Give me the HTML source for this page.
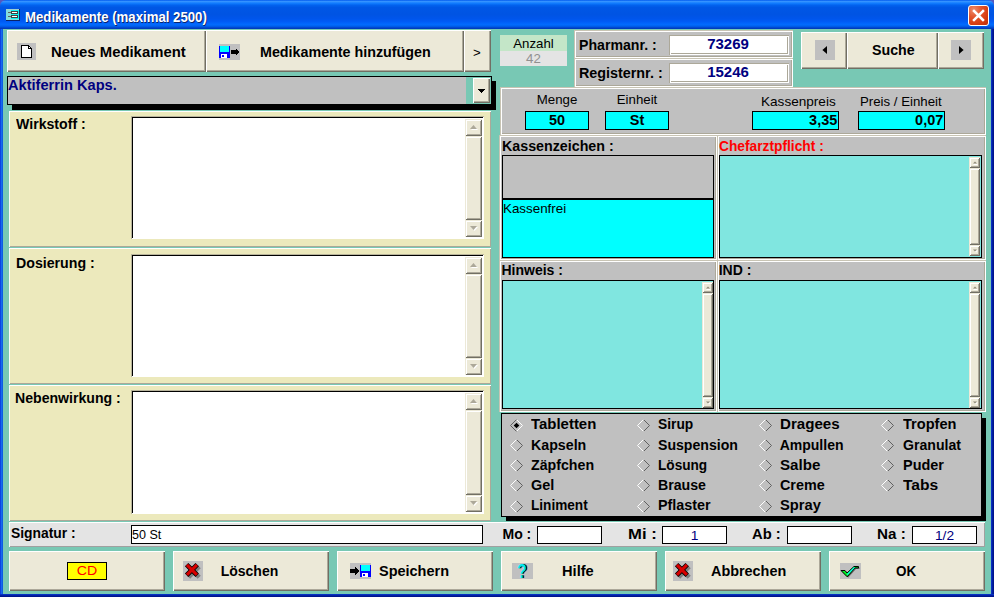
<!DOCTYPE html>
<html lang="de"><head><meta charset="utf-8"><title>Medikamente (maximal 2500)</title>
<style>
html,body{margin:0;padding:0;}
body{width:994px;height:597px;overflow:hidden;position:relative;background:#78C8B4;font-family:"Liberation Sans",sans-serif;}
body>div,body>svg,body>span{position:absolute;display:block;}
.t{white-space:nowrap;line-height:1;}
.titlebar{left:0;top:0;width:994px;height:29px;border-radius:6px 6px 0 0;
 background:linear-gradient(to bottom,#0058EE 0%,#3593FF 5%,#127DFF 11%,#0262EE 18%,#0057E5 26%,#0054E3 50%,#0055EB 64%,#005BF5 74%,#026AFE 84%,#0062EF 90%,#0048D0 95%,#0034B4 100%);}
.bl{left:0;top:29px;width:3px;height:568px;background:linear-gradient(to right,#0831D9,#166AEE,#0855DD);}
.br{left:991px;top:29px;width:3px;height:568px;background:linear-gradient(to right,#0838D0 0%,#0428B4 35%,#00168F 65%,#00138C 100%);}
.bb{left:0;top:594px;width:994px;height:3px;background:linear-gradient(to bottom,#0838D0 0%,#0428B4 35%,#00168F 65%,#00138C 100%);}
.close{left:968px;top:5px;width:21px;height:21px;border-radius:3px;box-sizing:border-box;border:1px solid #fff;
 background:radial-gradient(circle at 25% 20%,#EE8C6C 0%,#E2562E 35%,#D63C10 70%,#B82E08 100%);}
.close svg{position:absolute;left:-1px;top:-1px;}
.btn{background:#ECE9D8;box-sizing:border-box;box-shadow:inset 1px 1px 0 #fff, inset -1px -1px 0 #716F64, inset -2px -2px 0 #ACA899;}
.sbtn{background:#ECE9D8;box-sizing:border-box;box-shadow:inset 1px 1px 0 #ECE9D8, inset -1px -1px 0 #716F64, inset 2px 2px 0 #fff, inset -2px -2px 0 #ACA899;}
.raisedL{box-sizing:border-box;box-shadow:inset 1px 1px 0 #fff, inset -1px -1px 0 #ACA899;}
.raised{box-sizing:border-box;box-shadow:inset 1px 1px 0 #fff, inset -1px -1px 0 #808080;}
.etched{box-sizing:border-box;box-shadow:inset 1px 1px 0 #C8C4B4, inset -1px -1px 0 #fff, inset 2px 2px 0 #fff, inset -2px -2px 0 #ACA899;}
.raised2{box-sizing:border-box;box-shadow:inset 1px 1px 0 #fff, inset -1px -1px 0 #ACA899, inset 2px 2px 0 #ACA899, inset -2px -2px 0 #fff;}
.sunk{box-sizing:border-box;box-shadow:inset 1px 1px 0 #B8B49C, inset -1px -1px 0 #fff, inset 2px 2px 0 #000;}
.sunk2{box-sizing:border-box;box-shadow:inset 1px 1px 0 #ACA899, inset -1px -1px 0 #fff, inset 2px 2px 0 #fff, inset -2px -2px 0 #ACA899;}
</style></head>
<body>
<div style="left:0;top:0;width:994px;height:8px;background:#5458C0"></div>
<div class="titlebar"></div>
<div class="bl"></div><div class="br"></div><div class="bb"></div>
<svg style="left:6px;top:9px" width="14" height="12" viewBox="0 0 14 12" shape-rendering="crispEdges">
<rect x="0" y="0" width="14" height="12" fill="#0A246A"/><rect x="0" y="0" width="13" height="11" fill="#10F4F4"/>
<rect x="0" y="0" width="5" height="11" fill="#84DCDC"/><rect x="0" y="0" width="13" height="1" fill="#A0D0D0"/><rect x="0" y="10" width="13" height="1" fill="#84DCDC"/>
<rect x="5" y="2" width="7" height="3" fill="#404040"/><rect x="6" y="3" width="5" height="1" fill="#fff"/>
<rect x="5" y="6" width="7" height="3" fill="#404040"/><rect x="6" y="7" width="5" height="1" fill="#fff"/>
<rect x="2" y="3" width="3" height="1" fill="#606060"/><rect x="2" y="7" width="3" height="1" fill="#606060"/>
</svg>
<div class="t" style="left:24.5px;top:9.65px;font-size:14px;color:#fff;font-weight:bold;transform:scaleX(0.942);transform-origin:0 0;text-shadow:1px 1px 0 #0a246a;">Medikamente (maximal 2500)</div>
<div class="close"><svg width="21" height="21" viewBox="0 0 21 21"><path d="M6 6 L15 15 M15 6 L6 15" stroke="#fff" stroke-width="2.5" stroke-linecap="square"/></svg></div>
<div class="btn" style="left:7px;top:30px;width:199px;height:42px"></div>
<div class="btn" style="left:206px;top:30px;width:258px;height:42px"></div>
<div class="btn" style="left:464px;top:30px;width:27px;height:42px"></div>
<svg style="left:17px;top:43px" width="19" height="17" viewBox="0 0 19 17" shape-rendering="crispEdges">
<rect width="19" height="17" fill="#C0C0C0"/>
<path d="M4.5 2.5 H11.5 L14.5 5.5 V14.5 H4.5 Z" fill="#fff" stroke="#000" stroke-width="1"/>
<path d="M11.5 2.5 V5.5 H14.5" fill="none" stroke="#000" stroke-width="1"/></svg>
<div class="t" style="left:50.7px;top:44.85px;font-size:14px;color:#000;font-weight:bold;transform:scaleX(1.062);transform-origin:0 0;">Neues Medikament</div>
<svg style="left:219px;top:44px" width="21" height="16" viewBox="0 0 21 16" shape-rendering="crispEdges">
<rect width="21" height="16" fill="#C0C0C0"/>
<rect x="0" y="2" width="11" height="12" fill="#0000FF"/>
<rect x="1" y="2" width="9" height="6" fill="#00FFFF"/>
<rect x="2" y="10" width="6" height="4" fill="#fff"/>
<rect x="3" y="11" width="2" height="2" fill="#0000FF"/>
<rect x="12" y="6" width="5" height="4" fill="#000"/><path d="M16.5 3.6 L21 8 L16.5 12.4 Z" fill="#000"/></svg>
<div class="t" style="left:260px;top:45.15px;font-size:14px;color:#000;font-weight:bold;transform:scaleX(1.021);transform-origin:0 0;">Medikamente hinzufügen</div>
<div class="t" style="left:473px;top:46px;font-size:13px;color:#000;transform:scaleX(1.020);transform-origin:0 0;">&gt;</div>
<div style="left:12px;top:81px;width:484px;height:29px;background:#000"></div>
<div style="left:7px;top:76px;width:485px;height:29px;background:#C0C0C0;border:1px solid #000;box-sizing:border-box"></div>
<div style="left:466px;top:77px;width:25px;height:27px;background:#78C8B4"></div>
<div class="btn" style="left:473px;top:78px;width:17px;height:25px"></div>
<svg style="left:478px;top:89px" width="7" height="4" viewBox="0 0 7 4" shape-rendering="crispEdges"><path d="M0 0 H7 L3.5 4 Z" fill="#000"/></svg>
<div class="t" style="left:7.5px;top:77.85px;font-size:14px;color:#000080;font-weight:bold;transform:scaleX(1.043);transform-origin:0 0;">Aktiferrin Kaps.</div>
<div class="raisedL" style="left:9px;top:111px;width:482px;height:136px;background:#ECE9BC"></div>
<div class="sunk" style="left:131px;top:116px;width:353px;height:123px;background:#fff"></div>
<div style="left:465px;top:119px;width:17px;height:118px;background:#ECE9D8"></div>
<div class="sbtn" style="left:465px;top:119px;width:17px;height:17px"></div>
<div class="sbtn" style="left:465px;top:136px;width:17px;height:84px"></div>
<div class="sbtn" style="left:465px;top:220px;width:17px;height:17px"></div>
<svg style="left:470px;top:125px" width="8" height="5" viewBox="0 0 8 5"><path d="M1 5 H8 L4.5 1 Z" fill="#fff"/><path d="M0 4 H7 L3.5 0 Z" fill="#ACA899"/></svg>
<svg style="left:470px;top:226px" width="8" height="5" viewBox="0 0 8 5"><path d="M1 1 H8 L4.5 5 Z" fill="#fff"/><path d="M0 0 H7 L3.5 4 Z" fill="#ACA899"/></svg>
<div class="t" style="left:15.5px;top:117.15px;font-size:14px;color:#000;font-weight:bold;transform:scaleX(1.009);transform-origin:0 0;">Wirkstoff :</div>
<div class="raisedL" style="left:9px;top:248px;width:482px;height:136px;background:#ECE9BC"></div>
<div class="sunk" style="left:131px;top:254px;width:353px;height:123px;background:#fff"></div>
<div style="left:465px;top:257px;width:17px;height:118px;background:#ECE9D8"></div>
<div class="sbtn" style="left:465px;top:257px;width:17px;height:17px"></div>
<div class="sbtn" style="left:465px;top:274px;width:17px;height:84px"></div>
<div class="sbtn" style="left:465px;top:358px;width:17px;height:17px"></div>
<svg style="left:470px;top:263px" width="8" height="5" viewBox="0 0 8 5"><path d="M1 5 H8 L4.5 1 Z" fill="#fff"/><path d="M0 4 H7 L3.5 0 Z" fill="#ACA899"/></svg>
<svg style="left:470px;top:364px" width="8" height="5" viewBox="0 0 8 5"><path d="M1 1 H8 L4.5 5 Z" fill="#fff"/><path d="M0 0 H7 L3.5 4 Z" fill="#ACA899"/></svg>
<div class="t" style="left:15.5px;top:255.65px;font-size:14px;color:#000;font-weight:bold;transform:scaleX(1.012);transform-origin:0 0;">Dosierung :</div>
<div class="raisedL" style="left:9px;top:385px;width:482px;height:136px;background:#ECE9BC"></div>
<div class="sunk" style="left:131px;top:390px;width:353px;height:124px;background:#fff"></div>
<div style="left:465px;top:393px;width:17px;height:119px;background:#ECE9D8"></div>
<div class="sbtn" style="left:465px;top:393px;width:17px;height:17px"></div>
<div class="sbtn" style="left:465px;top:410px;width:17px;height:85px"></div>
<div class="sbtn" style="left:465px;top:495px;width:17px;height:17px"></div>
<svg style="left:470px;top:399px" width="8" height="5" viewBox="0 0 8 5"><path d="M1 5 H8 L4.5 1 Z" fill="#fff"/><path d="M0 4 H7 L3.5 0 Z" fill="#ACA899"/></svg>
<svg style="left:470px;top:501px" width="8" height="5" viewBox="0 0 8 5"><path d="M1 1 H8 L4.5 5 Z" fill="#fff"/><path d="M0 0 H7 L3.5 4 Z" fill="#ACA899"/></svg>
<div class="t" style="left:15px;top:391.15px;font-size:14px;color:#000;font-weight:bold;transform:scaleX(1.007);transform-origin:0 0;">Nebenwirkung :</div>
<div style="left:9px;top:522px;width:976px;height:25px;background:#E4E4E4;box-shadow:inset 1px 1px 0 #fff, inset -1px -1px 0 #A0A0A0"></div>
<div class="t" style="left:10.5px;top:526.15px;font-size:14px;color:#000;font-weight:bold;transform:scaleX(0.990);transform-origin:0 0;">Signatur :</div>
<div style="left:131px;top:525px;width:352px;height:19px;background:#fff;border:1px solid #000;box-sizing:border-box"></div>
<div class="t" style="left:131.7px;top:528.84px;font-size:12px;color:#000;transform:scaleX(1.045);transform-origin:0 0;">50 St</div>
<div class="t" style="left:502.5px;top:527.15px;font-size:14px;color:#000;font-weight:bold;">Mo :</div>
<div style="left:537px;top:526px;width:65px;height:18px;background:#fff;border:1px solid #000;box-sizing:border-box"></div>
<div class="t" style="left:627.5px;top:527.15px;font-size:14px;color:#000;font-weight:bold;transform:scaleX(1.190);transform-origin:0 0;">Mi :</div>
<div style="left:662px;top:526px;width:65px;height:18px;background:#fff;border:1px solid #000;box-sizing:border-box"></div>
<div class="t" style="left:662px;top:528.57px;font-size:13.5px;color:#000080;width:65px;text-align:center;transform:scaleX(1.020);transform-origin:50% 0;">1</div>
<div class="t" style="left:751.5px;top:527.15px;font-size:14px;color:#000;font-weight:bold;transform:scaleX(1.054);transform-origin:0 0;">Ab :</div>
<div style="left:787px;top:526px;width:65px;height:18px;background:#fff;border:1px solid #000;box-sizing:border-box"></div>
<div class="t" style="left:876.5px;top:527.15px;font-size:14px;color:#000;font-weight:bold;transform:scaleX(1.085);transform-origin:0 0;">Na :</div>
<div style="left:912px;top:526px;width:65px;height:18px;background:#fff;border:1px solid #000;box-sizing:border-box"></div>
<div class="t" style="left:912px;top:528.57px;font-size:13.5px;color:#000080;width:65px;text-align:center;transform:scaleX(1.020);transform-origin:50% 0;">1/2</div>
<div class="btn" style="left:9px;top:551px;width:156px;height:40px"></div>
<div class="btn" style="left:173px;top:551px;width:156px;height:40px"></div>
<div class="btn" style="left:337px;top:551px;width:156px;height:40px"></div>
<div class="btn" style="left:501px;top:551px;width:156px;height:40px"></div>
<div class="btn" style="left:665px;top:551px;width:156px;height:40px"></div>
<div class="btn" style="left:829px;top:551px;width:156px;height:40px"></div>
<div style="left:67px;top:562px;width:40px;height:17.5px;background:#FFFF00;border:1px solid #000;box-sizing:border-box"></div>
<div class="t" style="left:67px;top:564.07px;font-size:13.5px;color:#FF0000;width:40px;text-align:center;transform:scaleX(1.051);transform-origin:50% 0;">CD</div>
<svg style="left:183px;top:561px" width="20" height="20" viewBox="0 0 20 20">
<rect width="20" height="20" fill="#C0C0C0"/>
<path d="M5.6 5.6 L16.2 16.2 M16.2 5.6 L5.6 16.2" stroke="#808080" stroke-width="4.4"/>
<path d="M3.6 3.6 L14.2 14.2 M14.2 3.6 L3.6 14.2" stroke="#000" stroke-width="4.8"/>
<path d="M3.9 3.9 L13.9 13.9 M13.9 3.9 L3.9 13.9" stroke="#D80000" stroke-width="3.2"/>
</svg>
<div class="t" style="left:220.7px;top:563.85px;font-size:14px;color:#000;font-weight:bold;">Löschen</div>
<svg style="left:350px;top:563px" width="21" height="16" viewBox="0 0 21 16" shape-rendering="crispEdges">
<rect width="21" height="16" fill="#C0C0C0"/>
<rect x="10" y="2" width="11" height="12" fill="#0000FF"/>
<rect x="11" y="2" width="9" height="6" fill="#00FFFF"/>
<rect x="12" y="10" width="6" height="4" fill="#fff"/>
<rect x="13" y="11" width="2" height="2" fill="#0000FF"/>
<rect x="0" y="6" width="5" height="4" fill="#000"/><path d="M4.6 3.6 L9.2 8 L4.6 12.4 Z" fill="#000"/></svg>
<div class="t" style="left:379px;top:563.85px;font-size:14px;color:#000;font-weight:bold;transform:scaleX(1.034);transform-origin:0 0;">Speichern</div>
<svg style="left:512px;top:563px" width="21" height="16" viewBox="0 0 21 16"><rect width="21" height="16" fill="#C0C0C0"/>
<text x="11.2" y="15.3" font-family="Liberation Sans" font-weight="bold" font-size="20.5" text-anchor="middle" fill="#000" transform="translate(11.2 0) scale(0.78 1) translate(-11.2 0)">?</text>
<text x="9.9" y="14.7" font-family="Liberation Sans" font-weight="bold" font-size="20.5" text-anchor="middle" fill="#00E8F0" transform="translate(9.9 0) scale(0.78 1) translate(-9.9 0)">?</text></svg>
<div class="t" style="left:561.7px;top:563.85px;font-size:14px;color:#000;font-weight:bold;transform:scaleX(1.045);transform-origin:0 0;">Hilfe</div>
<svg style="left:673px;top:561px" width="20" height="20" viewBox="0 0 20 20">
<rect width="20" height="20" fill="#C0C0C0"/>
<path d="M5.6 5.6 L16.2 16.2 M16.2 5.6 L5.6 16.2" stroke="#808080" stroke-width="4.4"/>
<path d="M3.6 3.6 L14.2 14.2 M14.2 3.6 L3.6 14.2" stroke="#000" stroke-width="4.8"/>
<path d="M3.9 3.9 L13.9 13.9 M13.9 3.9 L3.9 13.9" stroke="#D80000" stroke-width="3.2"/>
</svg>
<div class="t" style="left:710.5px;top:563.85px;font-size:14px;color:#000;font-weight:bold;transform:scaleX(1.028);transform-origin:0 0;">Abbrechen</div>
<svg style="left:840px;top:563px" width="21" height="16" viewBox="0 0 21 16"><rect width="21" height="16" fill="#C0C0C0"/>
<path d="M2 8.5 H6 L8 11 L15 4.5 H19.5 V6 H16 L8.2 14.8 Z" fill="#707070"/>
<path d="M1 7.5 H5 L7 10 L14 3.5 H18.5 V5 H15 L7.2 13.8 Z" fill="#00F020" stroke="#000" stroke-width="1" stroke-linejoin="miter"/>
<path d="M7.2 11.6 L14.4 4.4" fill="none" stroke="#00FFFF" stroke-width="1.2"/></svg>
<div class="t" style="left:895.5px;top:563.85px;font-size:14px;color:#000;font-weight:bold;transform:scaleX(0.962);transform-origin:0 0;">OK</div>
<div style="left:500px;top:35px;width:67px;height:16px;background:#C4E6C8"></div>
<div style="left:500px;top:51px;width:67px;height:15px;background:#E4E4E4"></div>
<div class="t" style="left:500px;top:37px;font-size:13px;color:#000;width:67px;text-align:center;transform:scaleX(1.020);transform-origin:50% 0;">Anzahl</div>
<div class="t" style="left:500px;top:52px;font-size:13px;color:#909090;width:67px;text-align:center;transform:scaleX(1.020);transform-origin:50% 0;">42</div>
<div class="etched" style="left:574px;top:30px;width:219px;height:28px;background:#C0C0C0"></div>
<div class="etched" style="left:574px;top:58px;width:219px;height:29px;background:#C0C0C0"></div>
<div class="t" style="left:578.6px;top:38.15px;font-size:14px;color:#000;font-weight:bold;transform:scaleX(1.009);transform-origin:0 0;">Pharmanr. :</div>
<div class="t" style="left:578.6px;top:65.65px;font-size:14px;color:#000;font-weight:bold;transform:scaleX(1.024);transform-origin:0 0;">Registernr. :</div>
<div class="sunk2" style="left:669px;top:35px;width:120px;height:20px;background:#fff"></div>
<div class="sunk2" style="left:669px;top:63px;width:120px;height:20px;background:#fff"></div>
<div class="t" style="left:669px;top:37.15px;font-size:14px;color:#000080;font-weight:bold;width:118px;text-align:center;transform:scaleX(1.071);transform-origin:50% 0;">73269</div>
<div class="t" style="left:669px;top:65.15px;font-size:14px;color:#000080;font-weight:bold;width:118px;text-align:center;transform:scaleX(1.071);transform-origin:50% 0;">15246</div>
<div class="btn" style="left:801px;top:32px;width:46px;height:37px"></div>
<div class="btn" style="left:847px;top:32px;width:91px;height:37px"></div>
<div class="btn" style="left:938px;top:32px;width:46px;height:37px"></div>
<div style="left:815px;top:40px;width:20px;height:20px;background:#C0C0C0"></div>
<div style="left:951px;top:40px;width:20px;height:20px;background:#C0C0C0"></div>
<svg style="left:822px;top:46px" width="5" height="8" viewBox="0 0 5 8"><path d="M5 0 V8 L0.4 4 Z" fill="#000"/></svg>
<svg style="left:959px;top:46px" width="5" height="8" viewBox="0 0 5 8"><path d="M0 0 V8 L4.6 4 Z" fill="#000"/></svg>
<div class="t" style="left:871.5px;top:42.65px;font-size:14px;color:#000;font-weight:bold;transform:scaleX(1.016);transform-origin:0 0;">Suche</div>
<div class="etched" style="left:500px;top:87px;width:486px;height:48px;background:#C0C0C0"></div>
<div class="t" style="left:525px;top:93px;font-size:13px;color:#000;width:64px;text-align:center;transform:scaleX(1.020);transform-origin:50% 0;">Menge</div>
<div class="t" style="left:605px;top:93px;font-size:13px;color:#000;width:64px;text-align:center;transform:scaleX(1.020);transform-origin:50% 0;">Einheit</div>
<div class="t" style="left:760.5px;top:94.5px;font-size:13px;color:#000;transform:scaleX(1.044);transform-origin:0 0;">Kassenpreis</div>
<div class="t" style="left:860px;top:94.5px;font-size:13px;color:#000;transform:scaleX(1.019);transform-origin:0 0;">Preis / Einheit</div>
<div style="left:525px;top:111px;width:64px;height:19px;background:#00FFFF;border:1px solid #000;box-sizing:border-box"></div>
<div class="t" style="left:525px;top:113.15px;font-size:14px;color:#000;font-weight:bold;width:64px;text-align:center;transform:scaleX(1.030);transform-origin:50% 0;">50</div>
<div style="left:605px;top:111px;width:64px;height:19px;background:#00FFFF;border:1px solid #000;box-sizing:border-box"></div>
<div class="t" style="left:605px;top:113.15px;font-size:14px;color:#000;font-weight:bold;width:64px;text-align:center;transform:scaleX(1.030);transform-origin:50% 0;">St</div>
<div style="left:752px;top:111px;width:87px;height:19px;background:#00FFFF;border:1px solid #000;box-sizing:border-box"></div>
<div class="t" style="left:752px;top:113.15px;font-size:14px;color:#000;font-weight:bold;width:85.2px;text-align:right;transform:scaleX(1.030);transform-origin:100% 0;">3,35</div>
<div style="left:858px;top:111px;width:87px;height:19px;background:#00FFFF;border:1px solid #000;box-sizing:border-box"></div>
<div class="t" style="left:858px;top:113.15px;font-size:14px;color:#000;font-weight:bold;width:85.2px;text-align:right;transform:scaleX(1.030);transform-origin:100% 0;">0,07</div>
<div class="etched" style="left:499px;top:135px;width:218px;height:125px;background:#C0C0C0"></div>
<div class="t" style="left:501.5px;top:138.65px;font-size:14px;color:#000;font-weight:bold;transform:scaleX(1.018);transform-origin:0 0;">Kassenzeichen :</div>
<div style="left:502px;top:155px;width:212px;height:103px;background:#00FFFF;border:1px solid #000;box-sizing:border-box"></div>
<div style="left:503px;top:156px;width:210px;height:42px;background:#C0C0C0"></div>
<div style="left:503px;top:198px;width:210px;height:2px;background:#000"></div>
<div class="t" style="left:502.5px;top:201.5px;font-size:13px;color:#000;transform:scaleX(1.029);transform-origin:0 0;">Kassenfrei</div>
<div class="etched" style="left:717px;top:135px;width:269px;height:125px;background:#C0C0C0"></div>
<div class="t" style="left:719px;top:138.65px;font-size:14px;color:#FF0000;font-weight:bold;transform:scaleX(0.983);transform-origin:0 0;">Chefarztpflicht :</div>
<div style="left:719px;top:155px;width:263px;height:103px;background:#80E6E0;border:1px solid #000;box-sizing:border-box"></div>
<div style="left:969px;top:157px;width:11px;height:99px;background:#ECE9D8"></div>
<div class="sbtn" style="left:969px;top:157px;width:11px;height:11px"></div>
<div class="sbtn" style="left:969px;top:168px;width:11px;height:77px"></div>
<div class="sbtn" style="left:969px;top:245px;width:11px;height:11px"></div>
<svg style="left:972.5px;top:161px" width="5" height="4" viewBox="0 0 5 4"><path d="M0.5 3.5 H4.5" stroke="#fff" stroke-width="1"/><path d="M0 2.6 H4 L2 0.6 Z" fill="#8C8878"/></svg>
<svg style="left:972.5px;top:249px" width="5" height="4" viewBox="0 0 5 4"><path d="M1 1.4 H5 L3 3.4 Z" fill="#fff"/><path d="M0 0.4 H4 L2 2.4 Z" fill="#8C8878"/></svg>
<div class="etched" style="left:499px;top:260px;width:218px;height:152px;background:#C0C0C0"></div>
<div class="t" style="left:501.5px;top:262.65px;font-size:14px;color:#000;font-weight:bold;">Hinweis :</div>
<div style="left:502px;top:280px;width:212px;height:129px;background:#80E6E0;border:1px solid #000;box-sizing:border-box"></div>
<div style="left:702px;top:282px;width:11px;height:126px;background:#ECE9D8"></div>
<div class="sbtn" style="left:702px;top:282px;width:11px;height:11px"></div>
<div class="sbtn" style="left:702px;top:293px;width:11px;height:104px"></div>
<div class="sbtn" style="left:702px;top:397px;width:11px;height:11px"></div>
<svg style="left:705.5px;top:286px" width="5" height="4" viewBox="0 0 5 4"><path d="M0.5 3.5 H4.5" stroke="#fff" stroke-width="1"/><path d="M0 2.6 H4 L2 0.6 Z" fill="#8C8878"/></svg>
<svg style="left:705.5px;top:401px" width="5" height="4" viewBox="0 0 5 4"><path d="M1 1.4 H5 L3 3.4 Z" fill="#fff"/><path d="M0 0.4 H4 L2 2.4 Z" fill="#8C8878"/></svg>
<div class="etched" style="left:717px;top:260px;width:269px;height:152px;background:#C0C0C0"></div>
<div class="t" style="left:718.7px;top:262.65px;font-size:14px;color:#000;font-weight:bold;">IND :</div>
<div style="left:719px;top:280px;width:263px;height:129px;background:#80E6E0;border:1px solid #000;box-sizing:border-box"></div>
<div style="left:969px;top:282px;width:11px;height:126px;background:#ECE9D8"></div>
<div class="sbtn" style="left:969px;top:282px;width:11px;height:11px"></div>
<div class="sbtn" style="left:969px;top:293px;width:11px;height:104px"></div>
<div class="sbtn" style="left:969px;top:397px;width:11px;height:11px"></div>
<svg style="left:972.5px;top:286px" width="5" height="4" viewBox="0 0 5 4"><path d="M0.5 3.5 H4.5" stroke="#fff" stroke-width="1"/><path d="M0 2.6 H4 L2 0.6 Z" fill="#8C8878"/></svg>
<svg style="left:972.5px;top:401px" width="5" height="4" viewBox="0 0 5 4"><path d="M1 1.4 H5 L3 3.4 Z" fill="#fff"/><path d="M0 0.4 H4 L2 2.4 Z" fill="#8C8878"/></svg>
<div style="left:506px;top:418px;width:480px;height:103px;background:#000"></div>
<div style="left:501px;top:413px;width:481px;height:104px;background:#C0C0C0;border:1px solid #000;box-sizing:border-box"></div>
<svg style="left:510px;top:418.5px" width="13" height="13" viewBox="0 0 13 13">
<path d="M6.5 0.5 L12.5 6.5 L6.5 12.5" fill="none" stroke="#fff" stroke-width="1"/>
<path d="M6.5 12.5 L0.5 6.5 L6.5 0.5" fill="none" stroke="#606060" stroke-width="1"/>
<path d="M6.5 3.7 L9.3 6.5 L6.5 9.3 L3.7 6.5 Z" fill="#000"/></svg>
<div class="t" style="left:530.7px;top:417.45px;font-size:14px;color:#000;font-weight:bold;transform:scaleX(1.067);transform-origin:0 0;">Tabletten</div>
<svg style="left:510px;top:438.5px" width="13" height="13" viewBox="0 0 13 13">
<path d="M6.5 0.5 L12.5 6.5 L6.5 12.5" fill="none" stroke="#606060" stroke-width="1"/>
<path d="M6.5 12.5 L0.5 6.5 L6.5 0.5" fill="none" stroke="#fff" stroke-width="1"/>
</svg>
<div class="t" style="left:530.7px;top:438.15px;font-size:14px;color:#000;font-weight:bold;transform:scaleX(1.015);transform-origin:0 0;">Kapseln</div>
<svg style="left:510px;top:458.5px" width="13" height="13" viewBox="0 0 13 13">
<path d="M6.5 0.5 L12.5 6.5 L6.5 12.5" fill="none" stroke="#606060" stroke-width="1"/>
<path d="M6.5 12.5 L0.5 6.5 L6.5 0.5" fill="none" stroke="#fff" stroke-width="1"/>
</svg>
<div class="t" style="left:530.7px;top:458.15px;font-size:14px;color:#000;font-weight:bold;transform:scaleX(1.014);transform-origin:0 0;">Zäpfchen</div>
<svg style="left:510px;top:478.5px" width="13" height="13" viewBox="0 0 13 13">
<path d="M6.5 0.5 L12.5 6.5 L6.5 12.5" fill="none" stroke="#606060" stroke-width="1"/>
<path d="M6.5 12.5 L0.5 6.5 L6.5 0.5" fill="none" stroke="#fff" stroke-width="1"/>
</svg>
<div class="t" style="left:530.7px;top:478.15px;font-size:14px;color:#000;font-weight:bold;transform:scaleX(1.032);transform-origin:0 0;">Gel</div>
<svg style="left:510px;top:499.5px" width="13" height="13" viewBox="0 0 13 13">
<path d="M6.5 0.5 L12.5 6.5 L6.5 12.5" fill="none" stroke="#606060" stroke-width="1"/>
<path d="M6.5 12.5 L0.5 6.5 L6.5 0.5" fill="none" stroke="#fff" stroke-width="1"/>
</svg>
<div class="t" style="left:530.7px;top:498.35px;font-size:14px;color:#000;font-weight:bold;transform:scaleX(0.972);transform-origin:0 0;">Liniment</div>
<svg style="left:637px;top:418.5px" width="13" height="13" viewBox="0 0 13 13">
<path d="M6.5 0.5 L12.5 6.5 L6.5 12.5" fill="none" stroke="#606060" stroke-width="1"/>
<path d="M6.5 12.5 L0.5 6.5 L6.5 0.5" fill="none" stroke="#fff" stroke-width="1"/>
</svg>
<div class="t" style="left:657.7px;top:417.45px;font-size:14px;color:#000;font-weight:bold;transform:scaleX(0.984);transform-origin:0 0;">Sirup</div>
<svg style="left:637px;top:438.5px" width="13" height="13" viewBox="0 0 13 13">
<path d="M6.5 0.5 L12.5 6.5 L6.5 12.5" fill="none" stroke="#606060" stroke-width="1"/>
<path d="M6.5 12.5 L0.5 6.5 L6.5 0.5" fill="none" stroke="#fff" stroke-width="1"/>
</svg>
<div class="t" style="left:657.7px;top:438.15px;font-size:14px;color:#000;font-weight:bold;transform:scaleX(1.007);transform-origin:0 0;">Suspension</div>
<svg style="left:637px;top:458.5px" width="13" height="13" viewBox="0 0 13 13">
<path d="M6.5 0.5 L12.5 6.5 L6.5 12.5" fill="none" stroke="#606060" stroke-width="1"/>
<path d="M6.5 12.5 L0.5 6.5 L6.5 0.5" fill="none" stroke="#fff" stroke-width="1"/>
</svg>
<div class="t" style="left:657.7px;top:458.15px;font-size:14px;color:#000;font-weight:bold;transform:scaleX(0.973);transform-origin:0 0;">Lösung</div>
<svg style="left:637px;top:478.5px" width="13" height="13" viewBox="0 0 13 13">
<path d="M6.5 0.5 L12.5 6.5 L6.5 12.5" fill="none" stroke="#606060" stroke-width="1"/>
<path d="M6.5 12.5 L0.5 6.5 L6.5 0.5" fill="none" stroke="#fff" stroke-width="1"/>
</svg>
<div class="t" style="left:657.7px;top:478.15px;font-size:14px;color:#000;font-weight:bold;transform:scaleX(1.011);transform-origin:0 0;">Brause</div>
<svg style="left:637px;top:499.5px" width="13" height="13" viewBox="0 0 13 13">
<path d="M6.5 0.5 L12.5 6.5 L6.5 12.5" fill="none" stroke="#606060" stroke-width="1"/>
<path d="M6.5 12.5 L0.5 6.5 L6.5 0.5" fill="none" stroke="#fff" stroke-width="1"/>
</svg>
<div class="t" style="left:657.7px;top:498.35px;font-size:14px;color:#000;font-weight:bold;transform:scaleX(1.026);transform-origin:0 0;">Pflaster</div>
<svg style="left:759px;top:418.5px" width="13" height="13" viewBox="0 0 13 13">
<path d="M6.5 0.5 L12.5 6.5 L6.5 12.5" fill="none" stroke="#606060" stroke-width="1"/>
<path d="M6.5 12.5 L0.5 6.5 L6.5 0.5" fill="none" stroke="#fff" stroke-width="1"/>
</svg>
<div class="t" style="left:779.7px;top:417.45px;font-size:14px;color:#000;font-weight:bold;transform:scaleX(1.080);transform-origin:0 0;">Dragees</div>
<svg style="left:759px;top:438.5px" width="13" height="13" viewBox="0 0 13 13">
<path d="M6.5 0.5 L12.5 6.5 L6.5 12.5" fill="none" stroke="#606060" stroke-width="1"/>
<path d="M6.5 12.5 L0.5 6.5 L6.5 0.5" fill="none" stroke="#fff" stroke-width="1"/>
</svg>
<div class="t" style="left:779.7px;top:438.15px;font-size:14px;color:#000;font-weight:bold;">Ampullen</div>
<svg style="left:759px;top:458.5px" width="13" height="13" viewBox="0 0 13 13">
<path d="M6.5 0.5 L12.5 6.5 L6.5 12.5" fill="none" stroke="#606060" stroke-width="1"/>
<path d="M6.5 12.5 L0.5 6.5 L6.5 0.5" fill="none" stroke="#fff" stroke-width="1"/>
</svg>
<div class="t" style="left:779.7px;top:458.15px;font-size:14px;color:#000;font-weight:bold;transform:scaleX(1.081);transform-origin:0 0;">Salbe</div>
<svg style="left:759px;top:478.5px" width="13" height="13" viewBox="0 0 13 13">
<path d="M6.5 0.5 L12.5 6.5 L6.5 12.5" fill="none" stroke="#606060" stroke-width="1"/>
<path d="M6.5 12.5 L0.5 6.5 L6.5 0.5" fill="none" stroke="#fff" stroke-width="1"/>
</svg>
<div class="t" style="left:779.7px;top:478.15px;font-size:14px;color:#000;font-weight:bold;transform:scaleX(1.025);transform-origin:0 0;">Creme</div>
<svg style="left:759px;top:499.5px" width="13" height="13" viewBox="0 0 13 13">
<path d="M6.5 0.5 L12.5 6.5 L6.5 12.5" fill="none" stroke="#606060" stroke-width="1"/>
<path d="M6.5 12.5 L0.5 6.5 L6.5 0.5" fill="none" stroke="#fff" stroke-width="1"/>
</svg>
<div class="t" style="left:779.7px;top:498.35px;font-size:14px;color:#000;font-weight:bold;transform:scaleX(1.051);transform-origin:0 0;">Spray</div>
<svg style="left:881px;top:418.5px" width="13" height="13" viewBox="0 0 13 13">
<path d="M6.5 0.5 L12.5 6.5 L6.5 12.5" fill="none" stroke="#606060" stroke-width="1"/>
<path d="M6.5 12.5 L0.5 6.5 L6.5 0.5" fill="none" stroke="#fff" stroke-width="1"/>
</svg>
<div class="t" style="left:902.7px;top:417.45px;font-size:14px;color:#000;font-weight:bold;transform:scaleX(1.042);transform-origin:0 0;">Tropfen</div>
<svg style="left:881px;top:438.5px" width="13" height="13" viewBox="0 0 13 13">
<path d="M6.5 0.5 L12.5 6.5 L6.5 12.5" fill="none" stroke="#606060" stroke-width="1"/>
<path d="M6.5 12.5 L0.5 6.5 L6.5 0.5" fill="none" stroke="#fff" stroke-width="1"/>
</svg>
<div class="t" style="left:902.7px;top:438.15px;font-size:14px;color:#000;font-weight:bold;transform:scaleX(1.007);transform-origin:0 0;">Granulat</div>
<svg style="left:881px;top:458.5px" width="13" height="13" viewBox="0 0 13 13">
<path d="M6.5 0.5 L12.5 6.5 L6.5 12.5" fill="none" stroke="#606060" stroke-width="1"/>
<path d="M6.5 12.5 L0.5 6.5 L6.5 0.5" fill="none" stroke="#fff" stroke-width="1"/>
</svg>
<div class="t" style="left:902.7px;top:458.15px;font-size:14px;color:#000;font-weight:bold;transform:scaleX(1.031);transform-origin:0 0;">Puder</div>
<svg style="left:881px;top:478.5px" width="13" height="13" viewBox="0 0 13 13">
<path d="M6.5 0.5 L12.5 6.5 L6.5 12.5" fill="none" stroke="#606060" stroke-width="1"/>
<path d="M6.5 12.5 L0.5 6.5 L6.5 0.5" fill="none" stroke="#fff" stroke-width="1"/>
</svg>
<div class="t" style="left:902.7px;top:478.15px;font-size:14px;color:#000;font-weight:bold;transform:scaleX(1.112);transform-origin:0 0;">Tabs</div>
</body></html>
